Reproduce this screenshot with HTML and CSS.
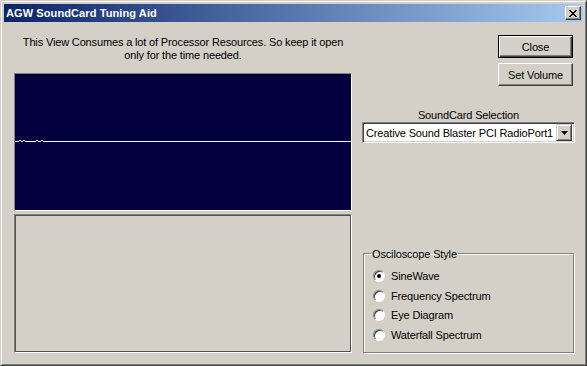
FILE: index.html
```html
<!DOCTYPE html>
<html lang="en">
  <head>
    <meta charset="UTF-8" />
    <title>AGW SoundCard Tuning Aid</title>
    <link rel="stylesheet" href="styles.css">
  </head>
  <body>
    <div class="window">
      <div class="frame">
        <div class="titlebar">
          <span class="title">AGW SoundCard Tuning Aid</span>
          <span class="caption-btn">
            <svg width="8" height="7" viewBox="0 0 8 7">
              <path d="M0 0h2v1h1v1h2V1h1V0h2v1H7v1H6v1H5v1h1v1h1v1h1v1H6V6H5V5H3v1H2v1H0V6h1V5h1V4h1V3H2V2H1V1H0z" fill="#000"/>
            </svg>
          </span>
        </div>

        <div class="client">
          <div class="left">
            <p class="notice">This View Consumes a lot of Processor Resources. So keep it open<br>only for the time needed.</p>
            <div class="scope">
              <svg width="336" height="136" viewBox="0 0 336 136" shape-rendering="crispEdges">
                <rect x="0" y="67" width="336" height="1" fill="#fff"/>
                <rect x="4" y="66" width="2" height="1" fill="#fff"/>
                <rect x="4" y="67" width="2" height="1" fill="#030040"/>
                <rect x="8" y="66" width="2" height="1" fill="#fff"/>
                <rect x="8" y="67" width="2" height="1" fill="#030040"/>
                <rect x="21" y="66" width="2" height="1" fill="#fff"/>
                <rect x="21" y="67" width="2" height="1" fill="#030040"/>
                <rect x="26" y="66" width="2" height="1" fill="#fff"/>
                <rect x="26" y="67" width="2" height="1" fill="#030040"/>
              </svg>
            </div>
            <div class="panel"></div>
          </div>

          <div class="right">
            <button class="btn btn-default">Close</button>
            <button class="btn">Set Volume</button>

            <div class="select-label">SoundCard Selection</div>
            <div class="combo">
              <span class="combo-text">Creative Sound Blaster PCI RadioPort1</span>
              <span class="combo-arrow">
                <svg width="7" height="4" viewBox="0 0 7 4"><path d="M0 0h7L3.5 4z" fill="#000"/></svg>
              </span>
            </div>

            <fieldset class="group">
              <legend>Osciloscope Style</legend>
              <label class="radio-row"><span class="radio checked"></span>SineWave</label>
              <label class="radio-row"><span class="radio"></span>Frequency Spectrum</label>
              <label class="radio-row"><span class="radio"></span>Eye Diagram</label>
              <label class="radio-row"><span class="radio"></span>Waterfall Spectrum</label>
            </fieldset>
          </div>
        </div>
      </div>
    </div>
  </body>
</html>
```

FILE: styles.css
```css
/* Reset */
* {
  margin: 0;
  padding: 0;
  box-sizing: border-box;
}

body {
  background: #d4d0c8;
  font-family: "Liberation Sans", Arial, sans-serif;
  font-size: 11px;
  letter-spacing: -0.15px;
  color: #000;
}

/* Window frame */
.window {
  width: 587px;
  height: 366px;
  background: #d4d0c8;
  border: 1px solid;
  border-color: #d4d0c8 #404040 #404040 #d4d0c8;
}

.frame {
  height: 100%;
  border: 1px solid;
  border-color: #fff #808080 #808080 #fff;
  padding: 2px;
  display: flex;
  flex-direction: column;
}

.titlebar {
  height: 18px;
  display: flex;
  align-items: center;
  justify-content: space-between;
  padding: 0 2px 0 2px;
  background: linear-gradient(90deg, #0a246a, #a6caf0);
}

.title {
  color: #fff;
  font-weight: bold;
  font-size: 11px;
  letter-spacing: 0.1px;
}

.caption-btn {
  width: 16px;
  height: 14px;
  display: flex;
  align-items: center;
  justify-content: center;
  background: #d4d0c8;
  border: 1px solid;
  border-color: #fff #404040 #404040 #fff;
  box-shadow: inset -1px -1px 0 #808080;
}

/* Client area */
.client {
  flex: 1;
  display: flex;
}

.left {
  width: 338px;
  margin-left: 10px;
  display: flex;
  flex-direction: column;
}

.notice {
  padding-top: 14px;
  line-height: 13px;
  text-align: center;
}

.scope {
  margin-top: 11px;
  height: 138px;
  background: #030040;
  border: 1px solid;
  border-color: #808080 #fff #fff #808080;
}

.scope svg {
  display: block;
}

.panel {
  margin-top: 3px;
  height: 139px;
  border: 1px solid;
  border-color: #808080 #fff #fff #808080;
  box-shadow: inset 0 0 0 1px #505050;
}

.right {
  width: 213px;
  margin-left: 10px;
  padding-top: 13px;
  padding-bottom: 9px;
  display: flex;
  flex-direction: column;
}

/* Push buttons */
.btn {
  width: 75px;
  height: 23px;
  align-self: flex-end;
  margin-right: 2px;
  font-family: inherit;
  font-size: 11px;
  letter-spacing: inherit;
  color: #000;
  background: #d4d0c8;
  border: 1px solid;
  border-color: #fff #404040 #404040 #fff;
  box-shadow: inset -1px -1px 0 #808080;
}

.btn-default {
  border: 1px solid #000;
  box-shadow: inset 1px 1px 0 #fff, inset -1px -1px 0 #404040, inset -2px -2px 0 #808080;
}

.btn + .btn {
  margin-top: 5px;
}

.select-label {
  margin-top: 23px;
  line-height: 13px;
  text-align: center;
}

/* Combo box */
.combo {
  height: 21px;
  display: flex;
  align-items: center;
  background: #fff;
  border: 1px solid;
  border-color: #808080 #fff #fff #808080;
  box-shadow: inset 1px 1px 0 #404040, inset -1px -1px 0 #d4d0c8;
  padding: 2px 2px 2px 3px;
}

.combo-text {
  flex: 1;
  white-space: nowrap;
  overflow: hidden;
}

.combo-arrow {
  width: 16px;
  height: 17px;
  display: flex;
  align-items: center;
  justify-content: center;
  background: #d4d0c8;
  border: 1px solid;
  border-color: #d4d0c8 #404040 #404040 #d4d0c8;
  box-shadow: inset 1px 1px 0 #fff, inset -1px -1px 0 #808080;
}

/* Group box */
.group {
  margin-top: auto;
  margin-left: 1px;
  margin-right: 1px;
  height: 106px;
  border: 1px solid #808080;
  box-shadow: 1px 1px 0 #fff, inset 1px 1px 0 #fff;
  padding: 6px 0 0 9px;
}

.group legend {
  margin-left: -2px;
  padding: 0 1px;
  line-height: 13px;
}

.group legend span,
.group legend {
  position: relative;
  top: 1px;
}

.radio-row {
  display: flex;
  align-items: center;
  height: 19.7px;
}

.radio {
  width: 12px;
  height: 12px;
  margin-right: 6px;
  border-radius: 50%;
  background: #fff;
  border: 1px solid;
  border-color: #808080 #fff #fff #808080;
  box-shadow: inset 1px 1px 0 #404040;
  position: relative;
}

.radio.checked::after {
  content: "";
  position: absolute;
  left: 3px;
  top: 3px;
  width: 4px;
  height: 4px;
  border-radius: 50%;
  background: #000;
}
```
